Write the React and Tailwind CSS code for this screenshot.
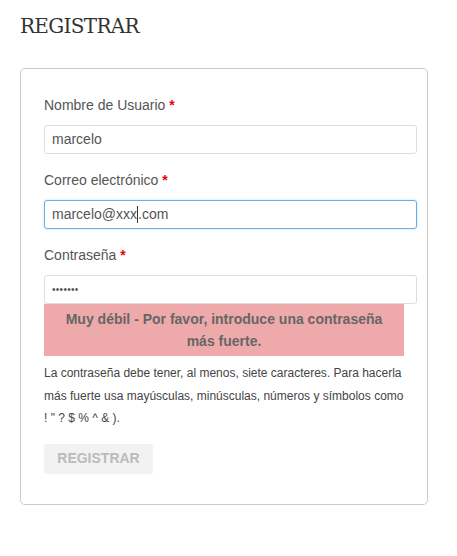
export default function App() {
  const sans = { fontFamily: '"Liberation Sans", Arial, sans-serif' };

  return (
    <div className="min-h-screen bg-white pl-[20px] pt-[12px]" style={sans}>
      <h1
        className="text-[20px] leading-[28px] font-normal text-[#333] tracking-[-0.7px]"
        style={{ fontFamily: '"DejaVu Serif", "Liberation Serif", serif' }}
      >
        REGISTRAR
      </h1>

      <div className="mt-[28px] w-[408px] rounded-[5px] border border-[#cccccc] pl-[23px] pr-[10px] pt-[26px] pb-[30px]">
        <Field label="Nombre de Usuario">
          <div className="flex h-[29px] items-center rounded-[3px] border border-[#dddddd] px-[7px] text-[14px] text-[#555]">
            marcelo
          </div>
        </Field>

        <Field label="Correo electrónico">
          <div className="flex h-[29px] items-center rounded-[3px] border border-[#66afe9] px-[7px] text-[14px] text-[#555] shadow-[0_0_2px_rgba(102,175,233,0.5)]">
            marcelo@xxx
            <span className="inline-block h-[17px] w-px bg-[#333]" />
            .com
          </div>
        </Field>

        <Field label="Contraseña" last>
          <div className="flex h-[29px] items-center rounded-[3px] border border-[#dddddd] px-[7px] text-[14px] text-[#555]">
            <span className="text-[10px] tracking-[0.3px]">•••••••</span>
          </div>
        </Field>

        <div className="w-[360px] bg-[#eeaaaa] px-[4px] py-[4px] text-center text-[14px] font-bold leading-[22px] text-[#666]">
          Muy débil - Por favor, introduce una contraseña
          <br />
          más fuerte.
        </div>

        <p className="mt-[6px] w-[360px] text-[12px] leading-[22.5px] text-[#444]">
          La contraseña debe tener, al menos, siete caracteres. Para hacerla más fuerte usa mayúsculas, minúsculas, números y símbolos como ! " ? $ % ^ &amp; ).
        </p>

        <button
          type="button"
          className="mt-[14px] h-[30px] w-[109px] rounded-[3px] bg-[#f2f2f2] text-[14px] font-bold text-[#bbbbbb]"
          style={sans}
        >
          REGISTRAR
        </button>
      </div>
    </div>
  );
}

function Field({ label, children, last }) {
  return (
    <div className={last ? '' : 'mb-[16px]'}>
      <label className="block text-[14px] leading-[20px] text-[#555]">
        {label} <span className="font-bold text-[#ee0000]">*</span>
      </label>
      <div className="mt-[10px]">{children}</div>
    </div>
  );
}
